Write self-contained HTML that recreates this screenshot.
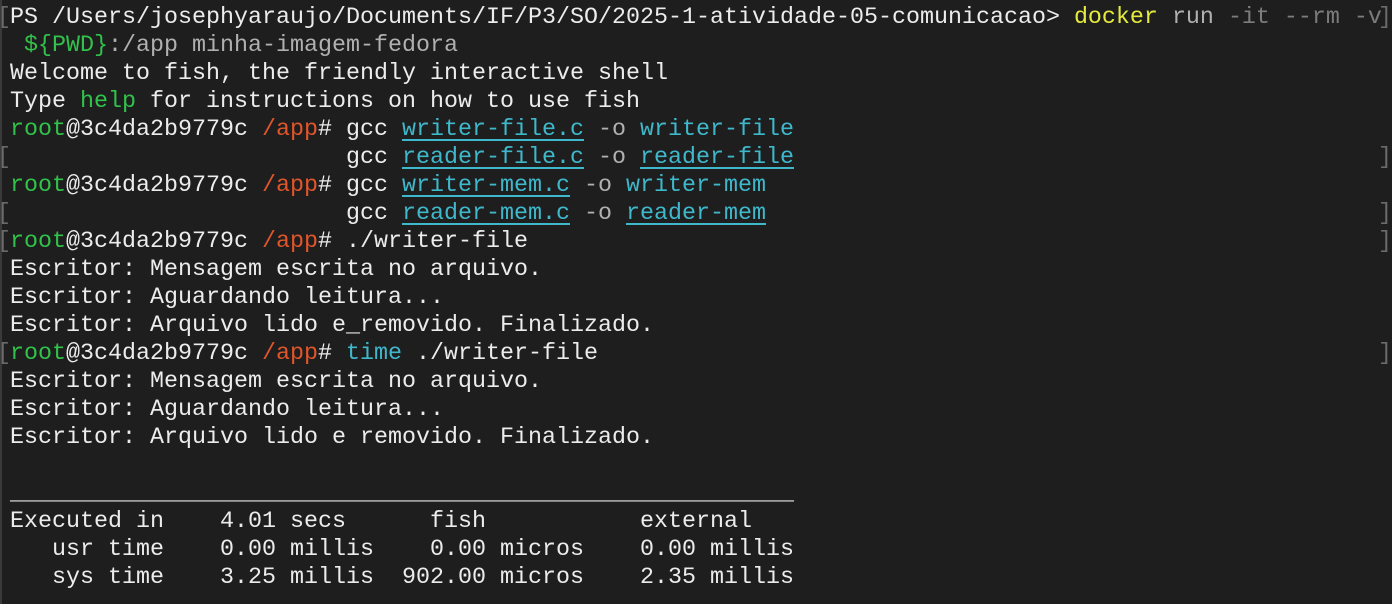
<!DOCTYPE html>
<html><head><meta charset="utf-8"><style>
html,body{margin:0;padding:0;background:#1e1e1e;width:1392px;height:604px;overflow:hidden}
#t{position:absolute;left:10px;top:4px;margin:0;font-family:"Liberation Mono",monospace;font-size:23.33px;line-height:28px;color:#ececec;white-space:pre}
.g{color:#31c24b}.r{color:#e0552c}.c{color:#3fb8cc}.u{text-decoration:underline;text-underline-offset:4px}
.y{color:#e6ea3c}.gr{color:#b0b0b0}.dg{color:#7c7c7c}
.b{position:absolute;font-family:"Liberation Mono",monospace;font-size:23.33px;line-height:28px;color:#6a6a6a}
#edge{position:absolute;left:0;top:0;width:2px;height:604px;background:#3a3a3a}
</style></head><body>
<div id="edge"></div>
<pre id="t">PS /Users/josephyaraujo/Documents/IF/P3/SO/2025-1-atividade-05-comunicacao&gt; <span class="y">docker</span> <span class="gr">run</span> <span class="dg">-it --rm -v</span>
 <span class="g">${PWD}</span><span class="gr">:/app minha-imagem-fedora</span>
Welcome to fish, the friendly interactive shell
Type <span class="g">help</span> for instructions on how to use fish
<span class="g">root</span>@3c4da2b9779c <span class="r">/app</span># gcc <span class="c u">writer-file.c</span> <span class="gr">-o</span> <span class="c">writer-file</span>
                        gcc <span class="c u">reader-file.c</span> <span class="gr">-o</span> <span class="c u">reader-file</span>
<span class="g">root</span>@3c4da2b9779c <span class="r">/app</span># gcc <span class="c u">writer-mem.c</span> <span class="gr">-o</span> <span class="c">writer-mem</span>
                        gcc <span class="c u">reader-mem.c</span> <span class="gr">-o</span> <span class="c u">reader-mem</span>
<span class="g">root</span>@3c4da2b9779c <span class="r">/app</span># ./writer-file
Escritor: Mensagem escrita no arquivo.
Escritor: Aguardando leitura...
Escritor: Arquivo lido e_removido. Finalizado.
<span class="g">root</span>@3c4da2b9779c <span class="r">/app</span># <span class="c">time</span> ./writer-file
Escritor: Mensagem escrita no arquivo.
Escritor: Aguardando leitura...
Escritor: Arquivo lido e removido. Finalizado.

________________________________________________________
Executed in    4.01 secs      fish           external
   usr time    0.00 millis    0.00 micros    0.00 millis
   sys time    3.25 millis  902.00 micros    2.35 millis</pre>
<span class="b" style="left:-3px;top:4px">[</span>
<span class="b" style="left:-3px;top:144px">[</span>
<span class="b" style="left:-3px;top:200px">[</span>
<span class="b" style="left:-3px;top:228px">[</span>
<span class="b" style="left:-3px;top:340px">[</span>
<span class="b" style="left:1378px;top:4px">]</span>
<span class="b" style="left:1378px;top:144px">]</span>
<span class="b" style="left:1378px;top:200px">]</span>
<span class="b" style="left:1378px;top:228px">]</span>
<span class="b" style="left:1378px;top:340px">]</span>
</body></html>
